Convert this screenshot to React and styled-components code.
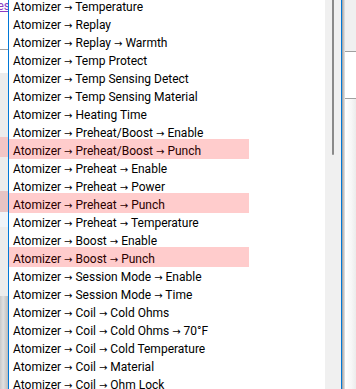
import React from 'react';
import styled, { createGlobalStyle } from 'styled-components';

const GlobalStyle = createGlobalStyle`
  html, body {
    margin: 0;
    padding: 0;
    background: #ffffff;
    overflow: hidden;
  }
  #root {
    height: 389px;
  }
`;

const Screen = styled.div`
  display: flex;
  height: 389px;
  overflow: hidden;
  font-family: Roboto, "Noto Sans", sans-serif;
  font-size: 12px;
`;

// page behind the popup, left side
const LeftStrip = styled.div`
  width: 8px;
  flex-shrink: 0;
  display: flex;
  flex-direction: column;
  overflow: hidden;
`;

const LinkArea = styled.div`
  height: 51px;
  background: #ffffff;
  display: flex;
  justify-content: flex-end;
  white-space: nowrap;
  line-height: 16px;
  margin-top: -2px;
`;

const Link = styled.span`
  color: #8a3ec4;
  text-decoration: underline;
  margin-right: -2px;
`;

const Rule = styled.div`
  height: 1px;
  flex-shrink: 0;
  background: #a0a0a0;
`;

const Block = styled.div`
  height: ${p => p.h}px;
  flex-shrink: 0;
  background: ${p => p.bg};
`;

const Fade = styled.div`
  flex: 1;
  background: linear-gradient(to right, #c9c9c9, #e0e0e0 40%, #bdbdbd);
`;

const Popup = styled.div`
  width: 332px;
  flex-shrink: 0;
  display: flex;
  border-left: 1px solid #0078d7;
  border-right: 1px solid #0078d7;
  background: #ffffff;
`;

const List = styled.ul`
  flex: 1;
  list-style: none;
  margin: -4px 0 0;
  padding: 0;
  overflow: hidden;
`;

const Item = styled.li`
  width: 236px;
  height: ${p => (p.$hot ? 20 : 18)}px;
  margin: ${p => (p.$hot ? '-1px 0' : '0')};
  padding-left: 4px;
  line-height: ${p => (p.$hot ? 24 : 22)}px;
  white-space: nowrap;
  color: ${p => (p.$hot ? '#2a0000' : '#000000')};
  background: ${p => (p.$hot ? '#ffcccc' : 'transparent')};
`;

const Arrow = styled.span`
  font-family: "DejaVu Sans", sans-serif;
  font-size: 10px;
  line-height: 1;
`;

const Track = styled.div`
  width: 16px;
  flex-shrink: 0;
  background: #f0f0f0;
  display: flex;
  justify-content: center;
`;

const Thumb = styled.div`
  width: 2px;
  height: 155px;
  margin-right: 1px;
  background: #8a8a8a;
  border-radius: 0 0 1px 1px;
`;

const Shadow = styled.div`
  width: 3px;
  flex-shrink: 0;
  background: linear-gradient(to right, #9a9a9a, #c4c4c4, #e6e6e6);
`;

const RightStrip = styled.div`
  flex: 1;
  display: flex;
  flex-direction: column;
`;

const RightFade = styled.div`
  flex: 1;
  background: linear-gradient(to right, #ffffff, #f6f6f6 60%, #ececec);
`;

const items = [
  'Atomizer → Temperature',
  'Atomizer → Replay',
  'Atomizer → Replay → Warmth',
  'Atomizer → Temp Protect',
  'Atomizer → Temp Sensing Detect',
  'Atomizer → Temp Sensing Material',
  'Atomizer → Heating Time',
  'Atomizer → Preheat/Boost → Enable',
  'Atomizer → Preheat/Boost → Punch',
  'Atomizer → Preheat → Enable',
  'Atomizer → Preheat → Power',
  'Atomizer → Preheat → Punch',
  'Atomizer → Preheat → Temperature',
  'Atomizer → Boost → Enable',
  'Atomizer → Boost → Punch',
  'Atomizer → Session Mode → Enable',
  'Atomizer → Session Mode → Time',
  'Atomizer → Coil → Cold Ohms',
  'Atomizer → Coil → Cold Ohms → 70°F',
  'Atomizer → Coil → Cold Temperature',
  'Atomizer → Coil → Material',
  'Atomizer → Coil → Ohm Lock',
];

const isPunch = name => name.endsWith('Punch');

const Path = ({ name }) => {
  const parts = name.split(' → ');
  return parts.map((part, i) => (
    <React.Fragment key={i}>
      {i > 0 && (
        <>
          {' '}
          <Arrow>→</Arrow>{' '}
        </>
      )}
      {part}
    </React.Fragment>
  ));
};

export default function App() {
  return (
    <Screen>
      <GlobalStyle />
      <LeftStrip>
        <LinkArea>
          <Link>Profiles</Link>
        </LinkArea>
        <Rule />
        <Block h={23} bg="#ffffff" />
        <Block h={64} bg="#ececec" />
        <Block h={20} bg="#f2c6c6" />
        <Block h={34} bg="#ececec" />
        <Block h={21} bg="#e6c4c4" />
        <Block h={15} bg="#f0f4f8" />
        <Block h={69} bg="#ececec" />
        <Fade />
      </LeftStrip>
      <Popup>
        <List>
          {items.map(name => (
            <Item key={name} $hot={isPunch(name)}>
              <Path name={name} />
            </Item>
          ))}
        </List>
        <Track>
          <Thumb />
        </Track>
      </Popup>
      <Shadow />
      <RightStrip>
        <Block h={51} bg="#f0f0f0" />
        <Rule />
        <Block h={46} bg="#ffffff" />
        <Rule />
        <RightFade />
      </RightStrip>
    </Screen>
  );
}
